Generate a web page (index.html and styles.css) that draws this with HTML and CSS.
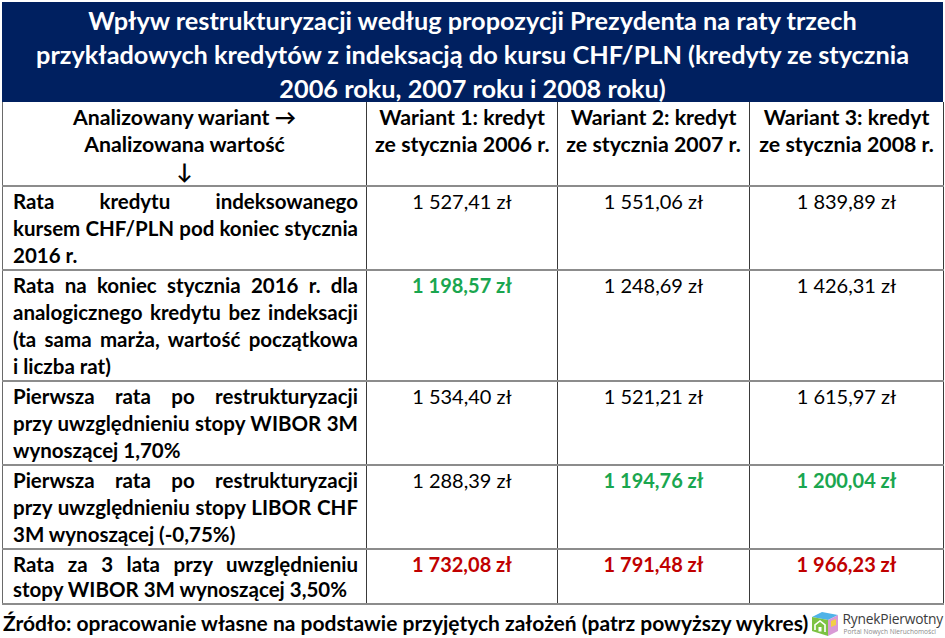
FILE: index.html
```html
<!DOCTYPE html>
<html lang="pl">
<head>
<meta charset="utf-8">
<link rel="stylesheet" href="styles.css">
</head>
<body>
<div class="page">
  <div class="title">Wpływ restrukturyzacji według propozycji Prezydenta na raty trzech<br>przykładowych kredytów z indeksacją do kursu CHF/PLN (kredyty ze stycznia<br>2006 roku, 2007 roku i 2008 roku)</div>
  <table class="grid">
    <colgroup><col class="c0"><col class="c1"><col class="c2"><col class="c3"></colgroup>
    <tr class="r-head">
      <th class="hcell">Analizowany wariant →<br>Analizowana wartość<br>↓</th>
      <th class="hcell">Wariant 1: kredyt<br>ze stycznia 2006 r.</th>
      <th class="hcell">Wariant 2: kredyt<br>ze stycznia 2007 r.</th>
      <th class="hcell">Wariant 3: kredyt<br>ze stycznia 2008 r.</th>
    </tr>
    <tr class="r3">
      <td class="label"><span class="ln">Rata kredytu indeksowanego</span><span class="ln">kursem CHF/PLN pod koniec stycznia</span><span class="ln last">2016 r.</span></td>
      <td class="val">1 527,41 zł</td>
      <td class="val">1 551,06 zł</td>
      <td class="val">1 839,89 zł</td>
    </tr>
    <tr class="r4">
      <td class="label"><span class="ln">Rata na koniec stycznia 2016 r. dla</span><span class="ln">analogicznego kredytu bez indeksacji</span><span class="ln">(ta sama marża, wartość początkowa</span><span class="ln last">i liczba rat)</span></td>
      <td class="val good">1 198,57 zł</td>
      <td class="val">1 248,69 zł</td>
      <td class="val">1 426,31 zł</td>
    </tr>
    <tr class="r3">
      <td class="label"><span class="ln">Pierwsza rata po restrukturyzacji</span><span class="ln">przy uwzględnieniu stopy WIBOR 3M</span><span class="ln last">wynoszącej 1,70%</span></td>
      <td class="val">1 534,40 zł</td>
      <td class="val">1 521,21 zł</td>
      <td class="val">1 615,97 zł</td>
    </tr>
    <tr class="r3">
      <td class="label"><span class="ln">Pierwsza rata po restrukturyzacji</span><span class="ln">przy uwzględnieniu stopy LIBOR CHF</span><span class="ln last">3M wynoszącej (-0,75%)</span></td>
      <td class="val">1 288,39 zł</td>
      <td class="val good">1 194,76 zł</td>
      <td class="val good">1 200,04 zł</td>
    </tr>
    <tr class="r2">
      <td class="label"><span class="ln">Rata za 3 lata przy uwzględnieniu</span><span class="ln last">stopy WIBOR 3M wynoszącej 3,50%</span></td>
      <td class="val bad">1 732,08 zł</td>
      <td class="val bad">1 791,48 zł</td>
      <td class="val bad">1 966,23 zł</td>
    </tr>
  </table>
  <div class="footer">
    <div class="source">Źródło: opracowanie własne na podstawie przyjętych założeń (patrz powyższy wykres)</div>
    <div class="logo">
      <svg class="logo-icon" width="31" height="28" viewBox="0 0 31 28">
        <polygon points="3,8 13,3 29,6 19,11" fill="#4fb3e8"/>
        <polygon points="3,8 19,11 19,27 3,22" fill="#7cc242"/>
        <polygon points="19,11 29,6 29,22 19,27" fill="#d99ad6"/>
        <polygon points="22,12 27,10 27,16 22,18" fill="#f2d045"/>
        <polyline points="6,21 6,16 11,12 16,16 16,23" fill="none" stroke="#ffffff" stroke-width="1.6"/>
        <rect x="9.5" y="18" width="3" height="4.5" fill="#ffffff"/>
      </svg>
      <div class="logo-text">
        <div class="logo-name">RynekPierwotny</div>
        <div class="logo-sub">Portal Nowych Nieruchomości</div>
      </div>
    </div>
  </div>
</div>
</body>
</html>
```
FILE: styles.css
```css
html, body {
  margin: 0;
  padding: 0;
  background: #ffffff;
}
body {
  font-family: "Lato", "Open Sans", sans-serif;
  color: #000000;
}
.page {
  width: 941px;
  padding: 2px 0 0 2px;
}
.title {
  background: #002060;
  color: #ffffff;
  font-weight: 700;
  font-size: 25.3px;
  line-height: 34px;
  height: 100px;
  box-sizing: border-box;
  padding-top: 1px;
  text-align: center;
  white-space: nowrap;
}
.grid {
  border-collapse: collapse;
  table-layout: fixed;
  width: 941px;
}
.c0 { width: 364px; }
.c1 { width: 191px; }
.c2 { width: 192px; }
.c3 { width: 194px; }
.grid th, .grid td {
  border-left: 1px solid #3a3a3a;
  border-right: 1px solid #3a3a3a;
  border-top: 2px solid #8c8c8c;
  border-bottom: 2px solid #8c8c8c;
  vertical-align: top;
  padding: 1px 8px 0 8px;
  font-size: 20px;
  line-height: 27px;
  box-sizing: border-box;
}
.grid tr:first-child th { border-top: 0; }
.grid th:first-child, .grid td:first-child { border-left: 1px solid #6a6a6a; }
.r-head { height: 83px; }
.r3 { height: 84px; }
.r4 { height: 111px; }
.r2 { height: 55px; }
.grid .r-head th {
  line-height: 27px;
  padding-top: 2px;
}
.grid .r2 td {
  line-height: 24.5px;
  padding-top: 2px;
}
.hcell {
  font-weight: 700;
  text-align: center;
  white-space: nowrap;
}
.grid th.hcell { font-size: 21.3px; }
.grid td.label {
  font-weight: 700;
  font-size: 20.5px;
  padding-left: 10px;
  padding-right: 8px;
}
.ln {
  display: block;
  white-space: nowrap;
  text-align: justify;
  text-align-last: justify;
}
.ln.last {
  text-align-last: left;
}
.val {
  text-align: center;
  font-weight: 400;
  white-space: nowrap;
}
.val.good {
  color: #1aa64f;
  font-weight: 700;
}
.val.bad {
  color: #c00000;
  font-weight: 700;
}
.footer {
  display: flex;
  align-items: flex-start;
  width: 941px;
  height: 35px;
}
.source {
  flex: none;
  font-weight: 700;
  font-size: 21px;
  line-height: 26px;
  padding-top: 5px;
  white-space: nowrap;
  padding-left: 1px;
}
.logo {
  flex: none;
  margin-left: auto;
  display: flex;
  align-items: center;
  gap: 2px;
  padding-top: 4px;
}
.logo-icon { display: block; }
.logo-text {
  flex: none;
  display: flex;
  flex-direction: column;
}
.logo-name {
  font-family: "Open Sans", sans-serif;
  font-size: 13.8px;
  line-height: 16px;
  color: #3c3c3c;
  letter-spacing: -0.2px;
  white-space: nowrap;
}
.logo-sub {
  font-family: "Open Sans", sans-serif;
  font-size: 6.6px;
  line-height: 9px;
  color: #8a8a8a;
  padding-left: 1px;
  white-space: nowrap;
}
```
